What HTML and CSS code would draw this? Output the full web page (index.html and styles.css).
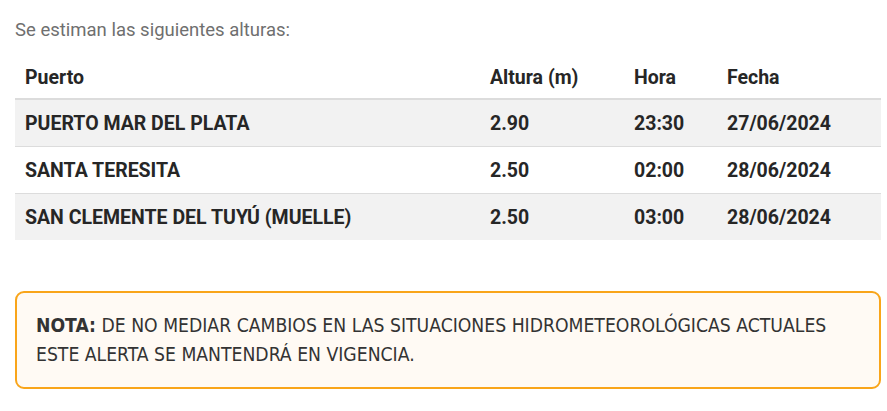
FILE: index.html
```html
<!DOCTYPE html>
<html lang="es">
<head>
<meta charset="utf-8">
<link rel="stylesheet" href="styles.css">
</head>
<body>
<div class="page">
  <p class="intro">Se estiman las siguientes alturas:</p>
  <table class="tbl">
    <thead>
      <tr><th class="c-port">Puerto</th><th class="c-alt">Altura (m)</th><th class="c-hora">Hora</th><th class="c-fecha">Fecha</th></tr>
    </thead>
    <tbody>
      <tr class="odd"><td>PUERTO MAR DEL PLATA</td><td>2.90</td><td>23:30</td><td>27/06/2024</td></tr>
      <tr><td>SANTA TERESITA</td><td>2.50</td><td>02:00</td><td>28/06/2024</td></tr>
      <tr class="odd"><td>SAN CLEMENTE DEL TUYÚ (MUELLE)</td><td>2.50</td><td>03:00</td><td>28/06/2024</td></tr>
    </tbody>
  </table>
  <div class="note">
    <p><strong>NOTA:</strong> DE NO MEDIAR CAMBIOS EN LAS SITUACIONES HIDROMETEOROLÓGICAS ACTUALES ESTE ALERTA SE MANTENDRÁ EN VIGENCIA.</p>
  </div>
</div>
</body>
</html>
```
FILE: styles.css
```css
html, body { margin: 0; padding: 0; background: #fff; }
body { font-family: Roboto, "Open Sans", sans-serif; color: #333; }
.page { padding: 15px 6px 0 15px; }
.intro { margin: 0 0 11px; font-size: 18.5px; color: #6f6f6f; line-height: 30px; }
.tbl { width: 866px; border-collapse: collapse; font-size: 19.5px; }
.tbl th { text-align: left; font-weight: 700; color: #262626; padding: 0 10px; height: 42px; vertical-align: middle; border-bottom: 2px solid #dcdcdc; }
.tbl td { font-weight: 700; color: #262626; padding: 0 10px; height: 46px; border-top: 1px solid #dcdcdc; }
.tbl tr.odd td { background: #f2f2f2; }
.tbl tbody tr:first-child td { border-top: 0; }
.c-port { width: 445px; }
.c-alt { width: 124px; }
.c-hora { width: 73px; }
.note { margin-top: 51px; border: 2px solid #f9a51a; border-radius: 9px; background: #fffaf4; padding: 18px 19px; }
.note p { margin: 0; font-family: "Liberation Sans Narrow", "DejaVu Sans Condensed", Roboto, sans-serif; font-size: 19.2px; line-height: 29px; color: #333; }
.note strong { font-weight: 700; }
```
